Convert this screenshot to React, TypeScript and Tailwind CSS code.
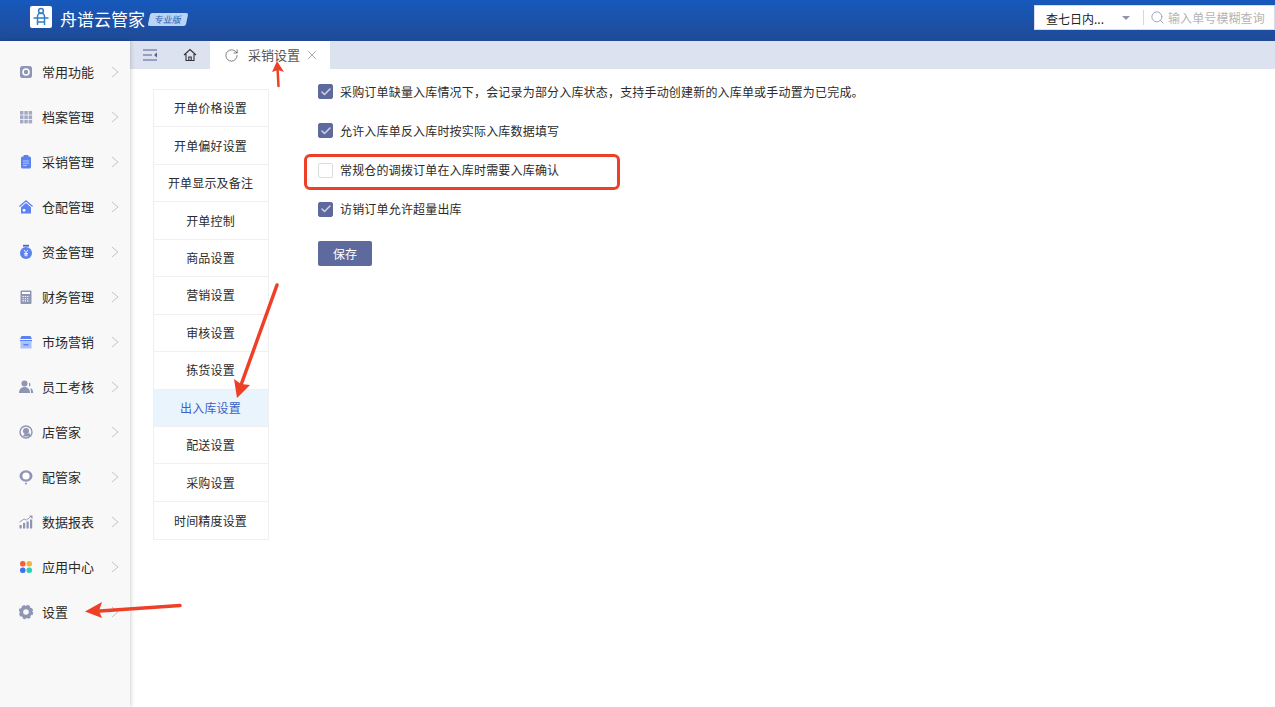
import React from "react";
import { X, RotateCw, Search, Check } from "lucide-react";

const gray = "#8f95b5";
const blue = "#5b82ee";

const icons: Record<string, React.ReactNode> = {
  常用功能: (<g><rect x="2" y="2" width="12" height="12" rx="2.5" fill={gray} /><circle cx="8" cy="8" r="3" fill="none" stroke="#fff" strokeWidth="1.6" /></g>),
  档案管理: (<g fill="#a5a9c3"><rect x="2" y="2" width="3.5" height="3.6" /><rect x="6.3" y="2" width="3.5" height="3.6" /><rect x="10.6" y="2" width="3.5" height="3.6" /><rect x="2" y="6.4" width="3.5" height="3.6" /><rect x="6.3" y="6.4" width="3.5" height="3.6" /><rect x="10.6" y="6.4" width="3.5" height="3.6" /><rect x="2" y="10.8" width="3.5" height="3.6" /><rect x="6.3" y="10.8" width="3.5" height="3.6" /><rect x="10.6" y="10.8" width="3.5" height="3.6" /></g>),
  采销管理: (<g><rect x="3" y="2.5" width="10" height="12" rx="1.5" fill={blue} /><rect x="5.5" y="1" width="5" height="2.5" rx="1" fill={blue} /><path d="M5 7h6M5 9.2h6M5 11.4h4" stroke="#c9d6fa" strokeWidth="0.8" /></g>),
  仓配管理: (<g><path d="M8 1 15 7l-.8.9L8 2.7 1.8 7.9 1 7z" fill={blue} /><path d="M8 4l5 4.2V14.5H3V8.2z" fill={blue} /><rect x="4.8" y="10" width="2.5" height="2.5" fill="#fff" /></g>),
  资金管理: (<g><rect x="5" y="0.8" width="6" height="1.8" fill="#4a66c8" /><circle cx="8" cy="9" r="6" fill={blue} /><path d="M6 6l2 2.5L10 6M8 8.5V12.5M6.2 9.5h3.6M6.2 11h3.6" stroke="#fff" strokeWidth="0.9" fill="none" /></g>),
  财务管理: (<g><rect x="2.5" y="1.5" width="11" height="13.5" rx="1" fill={gray} /><rect x="4" y="3" width="8" height="2" fill="#fff" /><path d="M4.5 7.5h7M4.5 9.7h7M4.5 11.9h7" stroke="#fff" strokeWidth="1.1" strokeDasharray="1.3 1" /></g>),
  市场营销: (<g><path d="M3.5 2h9l1.5 3H2z" fill={blue} /><rect x="2" y="6" width="12" height="1.4" fill={blue} /><rect x="2.5" y="8" width="11" height="6.5" fill="#a9c1f8" /><rect x="5.5" y="10" width="5" height="1.5" fill={blue} /></g>),
  员工考核: (<g fill={gray}><circle cx="6.5" cy="4.5" r="3" /><path d="M1 14c0-4 2.5-6 5.5-6s5.5 2 5.5 6z" /><path d="M11 3.5a2.3 2.3 0 0 1 0 4.3zM12.5 9c1.8.6 2.7 2.4 2.7 5H13z" /></g>),
  店管家: (<g><circle cx="8" cy="8" r="6" fill="none" stroke={gray} strokeWidth="1.4" /><circle cx="8" cy="7" r="3" fill={gray} /><path d="M4.5 12.5 7 9.5h5v3z" fill={gray} /></g>),
  配管家: (<g><ellipse cx="8" cy="7" rx="6.5" ry="5.7" fill={gray} /><circle cx="8" cy="7" r="3.6" fill="#fff" /><circle cx="8" cy="14.5" r="1" fill={gray} /></g>),
  数据报表: (<g fill="#9095b5"><rect x="1.5" y="11" width="2.2" height="3.5" /><rect x="5" y="9" width="2.2" height="5.5" /><rect x="8.5" y="7.5" width="2.2" height="7" /><rect x="12" y="5.5" width="2.2" height="9" /><path d="M1.5 8 6 5l2.5 1L13 2.5" fill="none" stroke="#9095b5" strokeWidth="0.9" /><path d="M11 1.5h3.5V5z" /></g>),
  应用中心: (<g><rect x="2" y="2" width="5.5" height="5.5" rx="2.5" fill="#f2613c" /><rect x="8.5" y="2" width="5.5" height="5.5" rx="2.5" fill="#f6b53a" /><rect x="2" y="8.5" width="5.5" height="5.5" rx="2.5" fill="#3d6ff0" /><rect x="8.5" y="8.5" width="5.5" height="5.5" rx="2.5" fill="#2ed0b4" /></g>),
  设置: (<g><circle cx="8" cy="8" r="4.5" fill="none" stroke={gray} strokeWidth="3.4" /><circle cx="8" cy="8" r="6.2" fill="none" stroke={gray} strokeWidth="2" strokeDasharray="3 1.87" /></g>),
};

const nav = ["常用功能", "档案管理", "采销管理", "仓配管理", "资金管理", "财务管理", "市场营销", "员工考核", "店管家", "配管家", "数据报表", "应用中心", "设置"];
const settings = ["开单价格设置", "开单偏好设置", "开单显示及备注", "开单控制", "商品设置", "营销设置", "审核设置", "拣货设置", "出入库设置", "配送设置", "采购设置", "时间精度设置"];
const options: [string, boolean][] = [
  ["采购订单缺量入库情况下，会记录为部分入库状态，支持手动创建新的入库单或手动置为已完成。", true],
  ["允许入库单反入库时按实际入库数据填写", true],
  ["常规仓的调拨订单在入库时需要入库确认", false],
  ["访销订单允许超量出库", true],
];

export default function App() {
  return (
    <div className="relative h-[707px] w-[1275px] overflow-hidden bg-white text-[12px] text-[#2b2b2b] [font-family:'Noto_Sans_CJK_SC','Liberation_Sans',sans-serif]">
      <header className="flex h-[41px] items-start justify-between bg-gradient-to-b from-[#1659bd] to-[#1f4a96]">
        <div className="flex items-center pl-[30px] pt-[6px]">
          <div className="flex h-[22px] w-[22px] items-center justify-center rounded-[2px] bg-white">
            <svg width="18" height="20" viewBox="0 0 18 20" fill="none" stroke="#2f7fc8" strokeWidth="1.5">
              <circle cx="9" cy="4" r="2.4" />
              <path d="M5.5 18V9.5a3.5 3.5 0 0 1 7 0V18M1.5 11h15M5.5 15h7" />
            </svg>
          </div>
          <span className="ml-[8px] mt-[2px] text-[17px] leading-none text-white">舟谱云管家</span>
          <span className="ml-[4px] mt-[4px] flex h-[13px] w-[38px] -skew-x-12 items-center justify-center rounded-[2px] bg-[#b9d4f5] text-[9px] leading-none text-[#2a5fb0]">专业版</span>
        </div>
        <div className="mt-[5px] flex h-[25px] w-[241px] items-center border border-[#d8dcea] bg-white">
          <span className="ml-[11px] mt-[3px] w-[68px] text-[12px] text-[#222]">查七日内...</span>
          <span className="ml-[8px] mt-[1px] h-0 w-0 border-x-[4px] border-t-[4px] border-x-transparent border-t-[#8f95ad]" />
          <span className="ml-[13px] h-[15px] w-px bg-[#d8d8d8]" />
          <Search size={15} strokeWidth={1.5} className="ml-[6px] text-[#9ba0b8]" />
          <span className="ml-[3px] whitespace-nowrap text-[12px] tracking-[0.1px] text-[#b5b5b5]">输入单号模糊查询</span>
        </div>
      </header>

      <div className="flex h-[666px]">
        <aside className="z-10 w-[130px] shrink-0 bg-[#f8f8f8] pt-[8.5px] shadow-[1px_0_4px_rgba(0,0,0,0.18)]">
          {nav.map((n) => (
            <div key={n} className="flex h-[45px] items-center">
              <svg width="16" height="16" viewBox="0 0 16 16" className="ml-[18px] shrink-0">{icons[n]}</svg>
              <span className="ml-[8px] w-[65px] text-[13px] text-[#2b2b2b]">{n}</span>
              <svg width="8" height="12" viewBox="0 0 8 12" fill="none" stroke="#c4c4c8" strokeWidth="1" className="ml-[4px]">
                <path d="M1 1l6 5-6 5" />
              </svg>
            </div>
          ))}
        </aside>

        <main className="flex-1">
          <div className="flex h-[28px] items-center bg-[#dde2f0]">
            <svg width="16" height="14" viewBox="0 0 16 14" className="ml-[12px]" fill="none" stroke="#555f8e" strokeWidth="1">
              <path d="M1 2h14M1 7h9M1 12h14" />
              <path d="M15 4.5v5L12 7z" fill="#555f8e" stroke="none" />
            </svg>
            <svg width="14" height="14" viewBox="0 0 14 14" className="ml-[25px]" fill="none" stroke="#333" strokeWidth="1.1">
              <path d="M1 7 7 1.5 13 7M3 6v6.5h8V6M5.8 12.5V9h2.4v3.5" />
            </svg>
            <div className="ml-[13px] flex h-[28px] w-[120px] items-center bg-white">
              <RotateCw size={15} strokeWidth={1.2} className="ml-[14px] text-[#555]" />
              <span className="ml-[9px] text-[13px] text-[#555]">采销设置</span>
              <X size={14} strokeWidth={1.1} className="ml-[5px] text-[#777]" />
            </div>
          </div>

          <div className="flex items-start pl-[23px] pt-[20px]">
            <div className="w-[116px] border border-[#f0f0f3]">
              {settings.map((s, i) => (
                <div
                  key={s}
                  className={`flex h-[37.45px] items-center justify-center border-b border-[#f0f0f3] pr-[1px] text-[12px] tracking-[0.17px] last:border-b-0 ${i === 8 ? "bg-[#eaf4fd] text-[#3b62c4]" : "text-[#2b2b2b]"}`}
                >
                  {s}
                </div>
              ))}
            </div>

            <div className="ml-[49px] -mt-[5px]">
              {options.map(([t, on]) => (
                <div key={t} className="mb-[24.3px] flex h-[15px] items-center">
                  <span className={`flex h-[15px] w-[15px] items-center justify-center rounded-[2px] border ${on ? "border-[#5e6a9e] bg-[#5e6a9e]" : "border-[#dcdcdc] bg-white"}`}>
                    {on && <Check size={12} strokeWidth={3} className="text-[#cfd4e8]" />}
                  </span>
                  <span className="ml-[7px] whitespace-nowrap text-[12px] tracking-[0.18px] text-[#2b2b2b]">{t}</span>
                </div>
              ))}
              <button className="mt-[2px] block h-[25px] w-[54px] rounded-[2px] bg-[#5e6a9e] text-[12px] text-white">保存</button>
            </div>
          </div>
        </main>
      </div>

      <div className="absolute left-[304px] top-[154px] h-[36px] w-[316px] rounded-[6px] border-[3px] border-[#ee4027]" />

      <svg className="absolute left-0 top-0 z-20" width="1275" height="707" fill="none">
        <path d="M278.5 86 277.5 68" stroke="#ee4027" strokeWidth="2.5" strokeLinecap="round" />
        <path d="M277 61 284 72 278 70 272 72z" fill="#ee4027" />
        <path d="M277 285 241 385" stroke="#ee4027" strokeWidth="3.5" strokeLinecap="round" />
        <path d="M237 398 234 379 241 384 250 385z" fill="#ee4027" />
        <path d="M180 605.5 100 611" stroke="#ee4027" strokeWidth="3.5" strokeLinecap="round" />
        <path d="M85 611.5 102 602 99 611 102 618z" fill="#ee4027" />
      </svg>
    </div>
  );
}
